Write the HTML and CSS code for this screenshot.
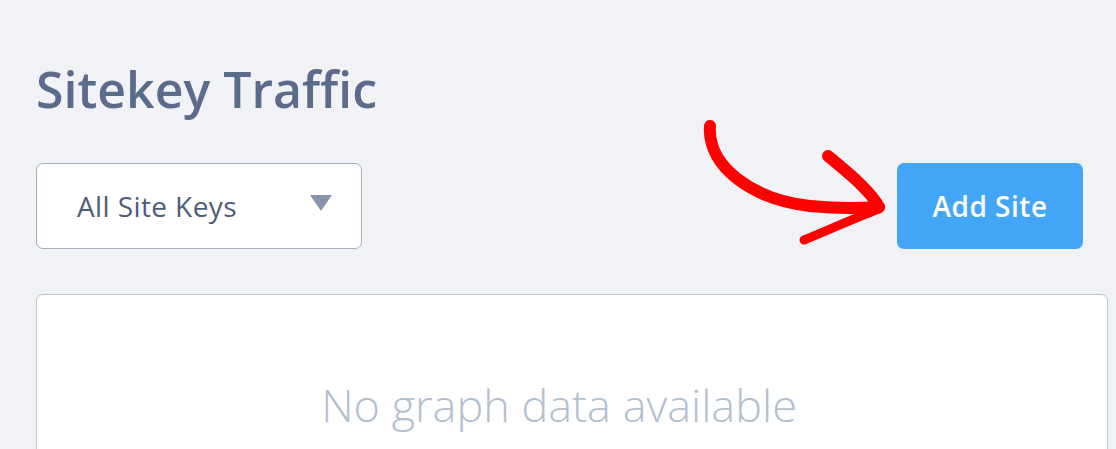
FILE: index.html
```html
<!DOCTYPE html>
<html>
<head>
<meta charset="utf-8">
<link rel="stylesheet" href="styles.css">
</head>
<body>
<div class="page">
  <h1 class="title">Sitekey Traffic</h1>
  <div class="controls">
    <div class="select">
      <span class="select-label">All Site Keys</span>
      <span class="caret"></span>
    </div>
    <button class="add-btn">Add Site</button>
    <svg class="arrow" width="200" height="140" viewBox="0 0 200 140">
      <path d="M30 10 C 27 52, 75 84, 130 90 C 160 93, 185 92, 199 91" fill="none" stroke="#ff0000" stroke-width="12" stroke-linecap="round"/>
      <path d="M148 40 C 166 55, 190 74, 199 91" fill="none" stroke="#ff0000" stroke-width="12" stroke-linecap="round"/>
      <path d="M199 93 C 175 102, 146 115, 124 124" fill="none" stroke="#ff0000" stroke-width="9" stroke-linecap="round"/>
    </svg>
  </div>
  <div class="card">
    <p class="empty">No graph data available</p>
  </div>
</div>
</body>
</html>
```
FILE: styles.css
```css
html, body {
  margin: 0;
  padding: 0;
  background: #f1f2f5;
  font-family: "Open Sans", "Noto Sans", sans-serif;
}
.page {
  padding: 0 8px 0 36px;
  height: 449px;
  overflow: hidden;
}
.title {
  margin: 0;
  padding-top: 55px;
  font-size: 50px;
  line-height: 68px;
  font-weight: 600;
  color: #5b6b8a;
}
.controls {
  position: relative;
  margin-top: 40px;
  display: flex;
  justify-content: space-between;
  align-items: center;
  padding-right: 25px;
}
.select {
  box-sizing: border-box;
  width: 326px;
  height: 86px;
  background: #fff;
  border: 1px solid #a3adbe;
  border-radius: 7px;
  display: flex;
  align-items: center;
  justify-content: space-between;
  padding: 0 29px 0 40px;
}
.select-label {
  font-size: 28px;
  letter-spacing: 0.4px;
  color: #4e5d7a;
}
.caret {
  width: 0;
  height: 0;
  border-left: 11.5px solid transparent;
  border-right: 11.5px solid transparent;
  border-top: 16px solid #8896ad;
  margin-top: -6px;
}
.add-btn {
  width: 186px;
  height: 86px;
  border: none;
  border-radius: 7px;
  background: #42a5f5;
  color: #fff;
  font-family: "Open Sans", "Noto Sans", sans-serif;
  font-size: 28px;
  letter-spacing: 0.5px;
  font-weight: 600;
  padding: 0;
}
.arrow {
  position: absolute;
  left: 644px;
  top: -47px;
  overflow: visible;
}
.card {
  margin-top: 45px;
  height: 220px;
  background: #fff;
  border: 1px solid #b8c2d0;
  border-radius: 7px;
  box-sizing: border-box;
  padding: 82px 26px 0 0;
}
.empty {
  margin: 0;
  text-align: center;
  font-size: 45px;
  font-weight: 300;
  color: #b4bfce;
  line-height: 56px;
}
```
